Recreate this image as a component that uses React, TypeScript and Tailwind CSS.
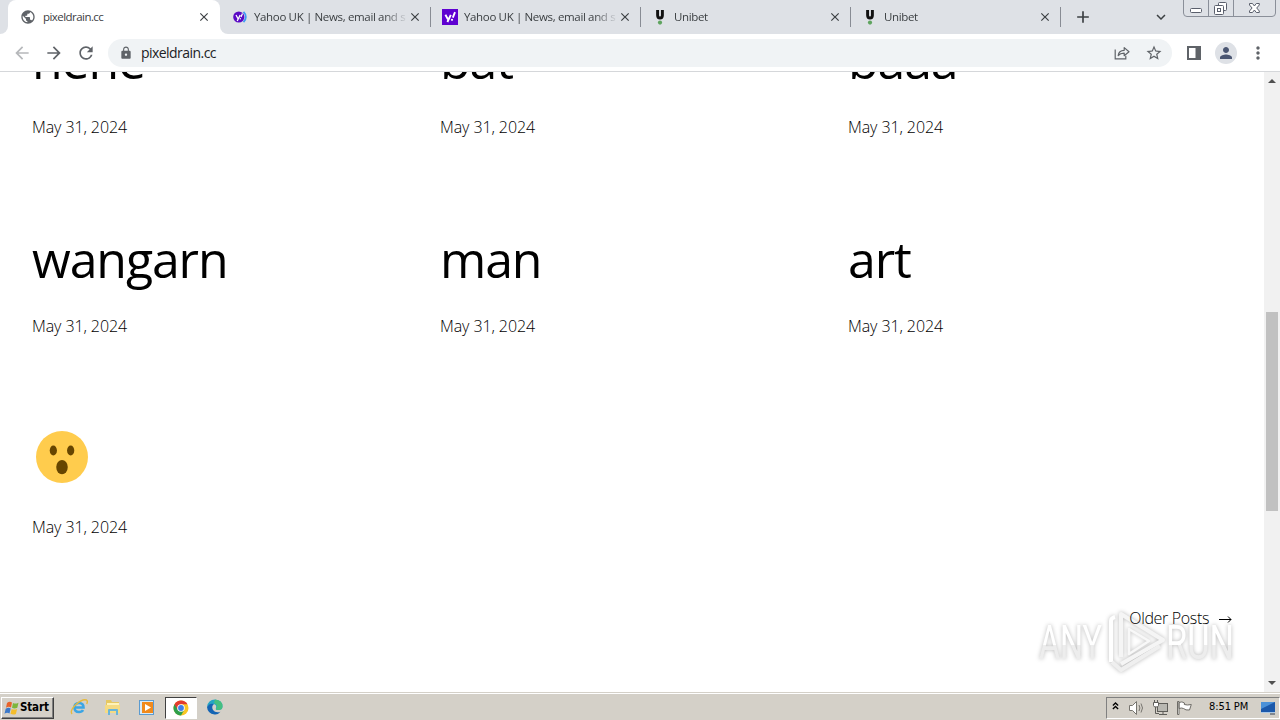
import React from 'react';
import { MdArrowBack, MdArrowForward, MdClose, MdExpandMore, MdLock, MdMoreVert, MdPerson, MdPublic, MdRefresh, MdStarBorder, MdAdd } from 'react-icons/md';

interface Tab {
  id: number;
  title: string;
  icon: React.ReactNode;
}

interface Post {
  id: number;
  title: string;
  date: string;
}

function YahooRoundIcon() {
  return (
    <svg viewBox="0 0 16 16" className="w-4 h-4">
      <path d="M11.5 2.8a7 7 0 0 1 0 10.4" fill="none" stroke="#3f9af5" strokeWidth="1.8" />
      <circle cx="6.8" cy="8" r="5.6" fill="#5a09c4" />
      <path d="M4 6l2.2 4M8.2 6l-3 6M10.5 4.5L9 8" stroke="#fff" strokeWidth="1.3" fill="none" />
      <circle cx="8.3" cy="9.8" r=".7" fill="#fff" />
    </svg>
  );
}

function YahooSquareIcon() {
  return (
    <svg viewBox="0 0 16 16" className="w-4 h-4">
      <rect width="16" height="16" fill="#5f01d1" />
      <path d="M3.4 5.8l2.5 4.4M8.8 5.8L5.4 13M13 3.2l-2.2 5.4" stroke="#fff" strokeWidth="1.9" fill="none" />
      <circle cx="10" cy="10.8" r="1.1" fill="#fff" />
    </svg>
  );
}

function UnibetIcon() {
  return (
    <svg viewBox="0 0 16 16" className="w-4 h-4">
      <path d="M5.6 1v5.2q0 2.8 2.4 2.8t2.4-2.8V1" fill="none" stroke="#111" strokeWidth="2.9" />
      <circle cx="8" cy="13.6" r="2.1" fill="#5fa45f" />
    </svg>
  );
}

function ShareIcon() {
  return (
    <svg viewBox="0 0 16 16" className="w-4 h-4" fill="none" stroke="#5f6368" strokeWidth="1.2">
      <path d="M1.2 4.5v9.3h10.6v-3" />
      <path d="M4.2 10.5q.5-5 6-5.2V2.6L15 6.7l-4.8 4V8.1q-4 0-6 2.4z" strokeLinejoin="round" />
    </svg>
  );
}

function WindowControls() {
  return (
    <svg viewBox="0 0 94 17" className="w-[94px] h-[17px]" fill="none" stroke="#5a5f6c">
      <path d="M.5 0v13q0 3.500 3.500 3.500h85q3.500 0 3.500-3.500V0M25.500 0v16M50.500 0v16" stroke="#8a8f99" />
      <rect x="7.500" y="8.500" width="11" height="4" rx="1" fill="#fff" />
      <path d="M35.500 5V3.500q0-1 1-1h6q1 0 1 1v6q0 1-1 1H41" fill="#fff" />
      <rect x="31.500" y="5.500" width="9" height="9" rx="1" fill="#fff" />
      <rect x="34.500" y="8.500" width="3" height="3" />
      <path d="M66.500 3.500h3l1.900 2.500 1.900-2.500h3v1.500l-2.600 3 2.600 3v1.500h-3l-1.900-2.500-1.900 2.500h-3V11l2.600-3-2.600-3z" fill="#fff" />
    </svg>
  );
}

function SurprisedFace() {
  return (
    <svg viewBox="0 0 36 36" className="w-[52px] h-[52px] ml-1 mt-[2px]">
      <circle cx="18" cy="18" r="18" fill="#ffcc4d" />
      <ellipse cx="12" cy="13.500" rx="2.500" ry="3.500" fill="#664500" />
      <ellipse cx="24" cy="13.500" rx="2.500" ry="3.500" fill="#664500" />
      <ellipse cx="18" cy="25" rx="4" ry="5" fill="#664500" />
    </svg>
  );
}

function Watermark() {
  return (
    <svg
      viewBox="0 0 210 80"
      className="absolute left-[1030px] top-[528px] w-[210px] h-[80px] drop-shadow-[0_0_2px_rgba(0,0,0,0.28)]"
    >
      <defs>
        <linearGradient id="mark" x1="0" y1="0" x2="0" y2="1">
          <stop offset="55%" stopColor="#fff" />
          <stop offset="55%" stopColor="#ededed" />
        </linearGradient>
      </defs>
      <g fill="url(#mark)" fontFamily="Roboto, sans-serif" fontSize="49">
        <text x="9" y="59" textLength="63" lengthAdjust="spacingAndGlyphs">ANY</text>
        <text x="136" y="59" textLength="68" lengthAdjust="spacingAndGlyphs">RUN</text>
      </g>
      <g fill="none" strokeWidth="4" strokeLinejoin="round">
        <path d="M81 62V21q0-3 4-4" stroke="#fff" />
        <path d="M91 57V14l42 26-42 24" stroke="#f5f5f5" />
        <path d="M82 62l9 8 39-24" stroke="#efefef" />
        <path d="M99 54V29l20 12z" stroke="#f8f8f8" strokeWidth="2.5" />
      </g>
    </svg>
  );
}

const tabs: Tab[] = [
  { id: 1, title: 'Yahoo UK | News, email and se', icon: <YahooRoundIcon /> },
  { id: 2, title: 'Yahoo UK | News, email and se', icon: <YahooSquareIcon /> },
  { id: 3, title: 'Unibet', icon: <UnibetIcon /> },
  { id: 4, title: 'Unibet', icon: <UnibetIcon /> },
];

const posts: Post[] = [
  { id: 1, title: 'hehe', date: 'May 31, 2024' },
  { id: 2, title: 'bat', date: 'May 31, 2024' },
  { id: 3, title: 'baaa', date: 'May 31, 2024' },
  { id: 4, title: 'wangarn', date: 'May 31, 2024' },
  { id: 5, title: 'man', date: 'May 31, 2024' },
  { id: 6, title: 'art', date: 'May 31, 2024' },
  { id: 7, title: '', date: 'May 31, 2024' },
];

function TabStrip() {
  return (
    <div className="flex h-[34px] bg-[#dee1e6] text-[11.5px] tracking-[-0.35px] text-[#3c4043] shrink-0">
      <div className="w-2 bg-white">
        <div className="w-2 h-[34px] bg-[#dee1e6] rounded-br-lg" />
      </div>
      <div className="flex items-center w-[212px] h-[34px] bg-white rounded-t-lg pl-3 pr-[9px]">
        <MdPublic className="w-4 h-4 text-[#5f6368]" />
        <span className="flex-1 ml-[7px] tracking-[-0.55px]">pixeldrain.cc</span>
        <MdClose className="w-[14px] h-[14px]" stroke="currentColor" />
      </div>
      <div className="flex bg-white">
        <div className="flex bg-[#dee1e6] rounded-bl-lg">
          {tabs.map((tab) => (
            <div key={tab.id} className="flex items-center w-[210px] h-[34px] pl-3">
              {tab.icon}
              <span className="w-[152px] ml-[6px] whitespace-nowrap [mask-image:linear-gradient(to_right,#000_130px,transparent_154px)]">
                {tab.title}
              </span>
              <MdClose className="w-[14px] h-[14px] ml-[2px]" stroke="currentColor" />
              <span className="w-px h-5 bg-[#888c94] ml-auto -mr-px" />
            </div>
          ))}
        </div>
      </div>
      <MdAdd className="w-5 h-5 ml-[13px] mt-[7px]" />
      <MdExpandMore className="w-[18px] h-[18px] ml-[59px] mt-2" />
      <div className="ml-[13px]">
        <WindowControls />
      </div>
    </div>
  );
}

function Toolbar() {
  return (
    <div className="flex items-center h-[38px] bg-white border-b border-[#d5d7da] text-[#5f6368] shrink-0">
      <MdArrowBack className="w-5 h-5 ml-3 text-[#b6b8bb]" />
      <MdArrowForward className="w-5 h-5 ml-3" />
      <MdRefresh className="w-5 h-5 ml-3" />
      <div className="flex items-center w-[1064px] h-7 ml-3 rounded-full bg-[#f0f3f5] pl-[11px] pr-[9px]">
        <MdLock className="w-[14px] h-[14px]" />
        <span className="flex-1 ml-2 text-[14px] tracking-[-0.55px] text-[#202124]">pixeldrain.cc</span>
        <ShareIcon />
        <MdStarBorder className="w-[18px] h-[18px] ml-[15px]" />
      </div>
      <svg viewBox="0 0 14 14" className="w-[14px] h-[14px] ml-[15px]">
        <path d="M1 1h12v12H1z" fill="none" stroke="#5f6368" strokeWidth="2" />
        <path d="M8.500 0H14v14H8.500z" fill="#5f6368" />
      </svg>
      <div className="flex items-center justify-center w-[22px] h-[22px] ml-[14px] rounded-full bg-[#dee1e6]">
        <MdPerson className="w-[18px] h-[18px] text-[#4b5672]" />
      </div>
      <MdMoreVert className="w-5 h-5 ml-[11px]" />
    </div>
  );
}

function Scrollbar() {
  return (
    <div className="flex flex-col items-center w-4 bg-[#f1f1f1] shrink-0">
      <div className="mt-[7px] border-x-4 border-b-4 border-x-transparent border-b-[#505050]" />
      <div className="mt-[229px] w-3 h-[199px] bg-[#c1c1c1]" />
      <div className="mt-auto mb-[7px] border-x-4 border-t-4 border-x-transparent border-t-[#505050]" />
    </div>
  );
}

function Taskbar() {
  return (
    <div className="flex items-center h-7 pt-px bg-[#d4d0c8] shrink-0 shadow-[inset_0_1px_0_#d4d0c8,inset_0_2px_0_#fff]">
      <div className="flex items-center w-[53px] h-[22px] ml-px mt-[2px] pl-[2px] border border-t-white border-l-white border-r-[#404040] border-b-[#404040] shadow-[inset_-1px_-1px_0_#808080] text-[11.5px] font-bold text-black tracking-[-0.15px] font-['DejaVu_Sans_Condensed','DejaVu_Sans',sans-serif]">
        <svg viewBox="0 0 16 16" className="w-4 h-4">
          <path d="M3 3q2.500-2 5-.5L7 7.500Q4.500 6 2 7.800z" fill="#e8632a" />
          <path d="M9 3q2.500 1.300 5.500-.3l-1.200 5Q10.500 9 8 7.800z" fill="#7db63c" />
          <path d="M1.700 8.800q2.500-1.700 5-.4l-1.200 5Q3 12 .5 13.700z" fill="#3b78c9" />
          <path d="M7.700 8.900q2.500 1.400 5.400 0l-1.200 5q-2.700 1.200-5.400-.1z" fill="#f4bd2b" />
        </svg>
        <span>Start</span>
      </div>

      <svg viewBox="0 0 18 18" className="w-[18px] h-[18px] ml-4">
        <path d="M4.500 9.500h9q0-4.500-4.500-4.500t-4.500 4.500 4.500 4.500q3 0 4-2" fill="none" stroke="#3ba5e4" strokeWidth="2.600" />
        <path d="M2 16Q-.5 12.500 6 6.500T16.500 2q1.500 1 .2 4" fill="none" stroke="#e6b93c" strokeWidth="1.400" />
      </svg>
      <svg viewBox="0 0 18 18" className="w-[18px] h-[18px] ml-4">
        <path d="M2 2h5l1 2h7v10H2z" fill="#e6c862" />
        <path d="M3 5h12v5H3z" fill="#fff3b8" />
        <path d="M1 7h15v8H1z" fill="#f5db83" />
        <path d="M4 17v-5q0-1 1-1h8q1 0 1 1v5h-2v-4H6v4z" fill="#69b5d9" />
      </svg>
      <svg viewBox="0 0 18 18" className="w-[18px] h-[18px] ml-4 mt-[2px]">
        <rect x="1.500" y="1.500" width="14" height="14" fill="#d9eaf7" stroke="#5b9bd0" />
        <rect x="4" y="3" width="11" height="11" fill="#f18a1c" />
        <path d="M7 5l6 3.500L7 12z" fill="#fff" />
      </svg>
      <div className="flex items-center justify-center w-8 h-[22px] mt-[2px] ml-[9px] bg-white border border-t-[#404040] border-l-[#404040] border-r-white border-b-white">
        <svg viewBox="0 0 16 16" className="w-4 h-4">
          <circle cx="8" cy="8" r="7.500" fill="#f9c623" />
          <path d="M1.500 4.250A7.500 7.500 0 0 0 8 15.500l3.200-5.600L8 8z" fill="#2d9f4b" />
          <path d="M1.500 4.250A7.500 7.500 0 0 1 14.500 4.250H8L4.700 9.800z" fill="#e33b2e" />
          <circle cx="8" cy="8" r="3.800" fill="#fff" />
          <circle cx="8" cy="8" r="2.900" fill="#3f7fe8" />
        </svg>
      </div>
      <svg viewBox="0 0 18 18" className="w-[18px] h-[18px] ml-[9px]">
        <path d="M1 9Q2 1.500 9 1.500q7.500.5 7.500 7 0 3.500-4.500 3.500-3 0-2-2 1-3-2-4-4-.5-7 3z" fill="#25a5c4" />
        <path d="M9 1.500q7.500.5 7.500 7 0 3.500-4.500 3.500-2 0-2.200-1 3-4-1.800-6z" fill="#45bf80" />
        <path d="M1 9q2.500-4.500 7-3-3 2.500-1 6 2.500 3.500 7.500 1.800Q12 17 8.500 16.500 1.500 15.500 1 9z" fill="#1464b4" />
      </svg>

      <div className="flex items-center w-[174px] h-[22px] mt-[2px] ml-auto pl-[5px] border border-t-[#808080] border-l-[#808080] border-r-white border-b-white">
        <svg viewBox="0 0 8 10" className="w-[7px] h-[10px] mb-[3px]" fill="none" stroke="#000" strokeWidth="1.500">
          <path d="M1 4.500l3-3 3 3M1 8.500l3-3 3 3" />
        </svg>
        <svg viewBox="0 0 18 16" className="w-[18px] h-4 ml-[9px]" fill="none" stroke="#77756f">
          <path d="M1.500 5.500h3l4-4v13l-4-4h-3z" fill="#fff" />
          <path d="M11 5q1.800 3 0 6M13 3.500q3 4.500 0 9" />
        </svg>
        <svg viewBox="0 0 18 16" className="w-[18px] h-4 ml-[6px]" fill="none" stroke="#5e5d59">
          <rect x="5.500" y="3.500" width="10" height="8" fill="#b9b8b2" stroke="#5e5d59" />
          <path d="M7 14.500h8M11 12v2M3.500 7v6.500H7" />
          <path d="M1.500 2.500h5v3q0 1.500-2.500 1.500T1.500 5.500zM2.500 0v2M5.500 0v2" fill="#fff" />
        </svg>
        <svg viewBox="0 0 18 16" className="w-[18px] h-4 ml-[6px]" fill="#fff" stroke="#6e6c67">
          <path d="M1.500 1.500H3v13H1.500zM3 2.500q3-1.500 5.500.5l-.2 1.500q3 1 7 0L13.500 10q-4 .5-6-1.500-2-1-4.500 0z" />
        </svg>
        <span className="ml-[15px] w-[43px] whitespace-nowrap text-[11px] tracking-[-0.1px] text-black font-['DejaVu_Sans_Condensed','DejaVu_Sans',sans-serif]">8:51 PM</span>
        <svg viewBox="0 0 16 16" className="w-4 h-4 ml-2">
          <path d="M1 2h14v10H1z" fill="#1b58aa" />
          <path d="M1 2h14L1 9z" fill="#4b91d8" />
          <path d="M1 12h14v1H1z" fill="#aac8e6" />
          <path d="M10 14h5" stroke="#303e55" />
        </svg>
      </div>
    </div>
  );
}

export default function App() {
  return (
    <main className="flex flex-col w-[1280px] h-[720px] overflow-hidden bg-white font-['Open_Sans','Noto_Sans',sans-serif]">
      <TabStrip />
      <Toolbar />

      <div className="flex flex-1 min-h-0 relative">
        <Watermark />
        <div className="flex-1 overflow-hidden text-black relative">
          <div className="grid grid-cols-[408px_408px_384px] gap-y-[91.2px] pl-8 -mt-[41.4px]">
            {posts.map((post) => (
              <article key={post.id} className="h-[108px]">
                <h2 className="h-[60px] text-[50px] leading-[58px] tracking-[-1.1px]">
                  {post.title || <SurprisedFace />}
                </h2>
                <p className="mt-6 text-[16px] leading-6 tracking-[-0.1px] font-light">{post.date}</p>
              </article>
            ))}
          </div>
          <div className="flex justify-end gap-[9px] mt-[69px] pr-8 text-[16px] leading-6 font-light">
            <span className="tracking-[-0.35px]">Older Posts</span>
            <svg viewBox="0 0 14 10" className="w-[14px] h-[10px] mt-2" fill="none" stroke="#000">
              <path d="M1 5.500h12M10 2.500l3 3-3 3" />
            </svg>
          </div>
        </div>
        <Scrollbar />
      </div>

      <Taskbar />
    </main>
  );
}
